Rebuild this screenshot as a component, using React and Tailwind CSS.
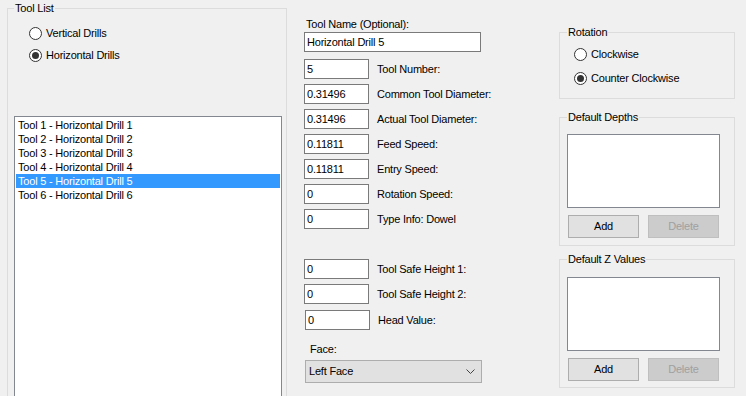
import React from 'react';

const tools = [
    'Tool 1 - Horizontal Drill 1',
    'Tool 2 - Horizontal Drill 2',
    'Tool 3 - Horizontal Drill 3',
    'Tool 4 - Horizontal Drill 4',
    'Tool 5 - Horizontal Drill 5',
    'Tool 6 - Horizontal Drill 6',
];

const fieldsTop = [
    { value: '5', label: 'Tool Number:' },
    { value: '0.31496', label: 'Common Tool Diameter:' },
    { value: '0.31496', label: 'Actual Tool Diameter:' },
    { value: '0.11811', label: 'Feed Speed:' },
    { value: '0.11811', label: 'Entry Speed:' },
    { value: '0', label: 'Rotation Speed:' },
    { value: '0', label: 'Type Info: Dowel' },
];

const fieldsBottom = [
    { value: '0', label: 'Tool Safe Height 1:' },
    { value: '0', label: 'Tool Safe Height 2:' },
    { value: '0', label: 'Head Value:', shift: true },
];

const Radio = ({ checked, label }) => (
    <div className="flex items-center h-[16px] gap-[4px]">
        <div className="w-[13px] h-[13px] rounded-full border border-[#333333] bg-white flex items-center justify-center">
            {checked && <div className="w-[7px] h-[7px] rounded-full bg-[#333333]" />}
        </div>
        <span>{label}</span>
    </div>
);

const Group = ({ title, className, children }) => (
    <fieldset className={`border border-[#dcdcdc] min-w-0 ${className}`}>
        <legend className="ml-[7px] px-[1px] leading-[12px]">{title}</legend>
        {children}
    </fieldset>
);

const TextBox = ({ value, className }) => (
    <div className={`h-[20px] border border-[#7a7a7a] bg-white flex items-center pl-[2px] ${className}`}>
        {value}
    </div>
);

const Button = ({ label, disabled }) => (
    <div
        className={`w-[71px] h-[23px] border flex items-center justify-center ${disabled ? 'bg-[#cccccc] border-[#bfbfbf] text-[#a0a0a0]' : 'bg-[#e1e1e1] border-[#adadad]'}`}
    >
        {label}
    </div>
);

const App = () => {
    return (
        <div className="w-[746px] h-[396px] overflow-hidden bg-[#f0f0f0] flex text-[11px] text-black tracking-[-0.2px] font-['Liberation_Sans',Arial,sans-serif]">
            {/* left: tool list */}
            <fieldset className="ml-[7px] mt-[2px] w-[280px] h-[430px] shrink-0 border border-[#dcdcdc] min-w-0">
                <legend className="ml-[6px] px-[1px] leading-[12px]">Tool List</legend>
                <div className="mt-[11px] ml-[21px] flex flex-col gap-[6px]">
                    <Radio label="Vertical Drills" />
                    <Radio checked label="Horizontal Drills" />
                </div>
                <div className="mt-[53px] ml-[6px] w-[268px] h-[300px] border border-[#828790] bg-white pt-[1px] px-[1px]">
                    {tools.map((t, i) => (
                        <div
                            key={t}
                            className={`h-[14px] leading-[14px] pl-[2px] ${i === 4 ? 'bg-[#3399ff] text-white' : ''}`}
                        >
                            {t}
                        </div>
                    ))}
                </div>
            </fieldset>

            {/* middle: tool fields */}
            <div className="ml-[17px] w-[255px] shrink-0 flex flex-col">
                <div className="mt-[18px] h-[13px] leading-[13px] pl-[2px]">Tool Name (Optional):</div>
                <TextBox value="Horizontal Drill 5" className="mt-[1px] w-[177px]" />
                <div className="mt-[7px] flex flex-col gap-[5px]">
                    {fieldsTop.map((f) => (
                        <div key={f.label} className="flex items-center gap-[8px]">
                            <TextBox value={f.value} className="w-[65px]" />
                            <span>{f.label}</span>
                        </div>
                    ))}
                </div>
                <div className="mt-[30px] flex flex-col gap-[5px]">
                    {fieldsBottom.map((f) => (
                        <div key={f.label} className={`flex items-center gap-[8px] ${f.shift ? 'ml-[1px] mt-[1px]' : ''}`}>
                            <TextBox value={f.value} className="w-[65px]" />
                            <span>{f.label}</span>
                        </div>
                    ))}
                </div>
                <div className="mt-[13px] ml-[6px] h-[13px] leading-[13px]">Face:</div>
                <div className="mt-[4px] ml-[1px] w-[177px] h-[23px] bg-[#e1e1e1] border border-[#adadad] flex items-center justify-between pl-[3px] pr-[6px]">
                    <span>Left Face</span>
                    <svg width="9" height="5" viewBox="0 0 9 5" fill="none">
                        <path d="M0.5 0.5 L4.5 4.5 L8.5 0.5" stroke="#444444" strokeWidth="1" />
                    </svg>
                </div>
            </div>

            {/* right: rotation, depths, z values */}
            <div className="w-[176px] shrink-0 flex flex-col">
                <Group title="Rotation" className="mt-[26px] h-[73px]">
                    <div className="mt-[8px] ml-[14px] flex flex-col gap-[8px]">
                        <Radio label="Clockwise" />
                        <Radio checked label="Counter Clockwise" />
                    </div>
                </Group>
                <Group title="Default Depths" className="mt-[12px] h-[135px]">
                    <div className="mt-[11px] ml-[7px] w-[153px] h-[74px] border border-[#828790] bg-white" />
                    <div className="mt-[7px] ml-[8px] flex gap-[9px]">
                        <Button label="Add" />
                        <Button label="Delete" disabled />
                    </div>
                </Group>
                <Group title="Default Z Values" className="mt-[7px] h-[135px]">
                    <div className="mt-[12px] ml-[7px] w-[153px] h-[74px] border border-[#828790] bg-white" />
                    <div className="mt-[7px] ml-[8px] flex gap-[9px]">
                        <Button label="Add" />
                        <Button label="Delete" disabled />
                    </div>
                </Group>
            </div>
        </div>
    );
};

export default App;
